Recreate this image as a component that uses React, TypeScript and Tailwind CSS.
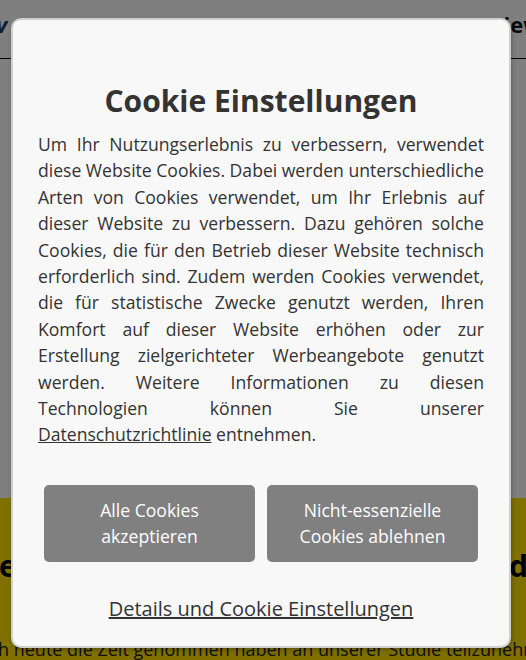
const lines = [
  "Um Ihr Nutzungserlebnis zu verbessern, verwendet",
  "diese Website Cookies. Dabei werden unterschiedliche",
  "Arten von Cookies verwendet, um Ihr Erlebnis auf",
  "dieser Website zu verbessern. Dazu gehören solche",
  "Cookies, die für den Betrieb dieser Website technisch",
  "erforderlich sind. Zudem werden Cookies verwendet,",
  "die für statistische Zwecke genutzt werden, Ihren",
  "Komfort auf dieser Website erhöhen oder zur",
  "Erstellung zielgerichteter Werbeangebote genutzt",
  "werden. Weitere Informationen zu diesen",
  "Technologien können Sie unserer",
];

export default function App() {
  return (
    <div className="relative h-[660px] w-[526px] overflow-hidden bg-white font-['Open_Sans',sans-serif] text-[#222]">
      {/* page behind the dialog */}
      <header className="flex h-[59px] items-start justify-between border-b border-black">
        <span className="-ml-[4px] mt-[8px] text-[22px] font-bold italic text-[#1e3a5f]">v</span>
        <span className="-mr-[16px] mt-[8px] text-[22px] font-bold text-[#111]">Overview</span>
      </header>
      <main className="h-[439px]" />
      <section className="flex h-[162px] flex-col bg-[#ffe000]">
        <div className="mt-[53px] flex justify-between text-[30px] font-bold leading-none text-black">
          <span className="-ml-[1px]">er</span>
          <span className="-mr-[2px]">d</span>
        </div>
        <p className="-ml-[2px] mt-[55px] whitespace-nowrap text-[18px] text-[#222]">
          h heute die Zeit genommen haben an unserer Studie teilzunehmen.
        </p>
      </section>
      <div className="absolute inset-0 bg-black/50" />

      {/* cookie dialog */}
      <div className="absolute left-[11px] top-[18px] flex h-[630px] w-[500px] flex-col items-center rounded-[10px] border-2 border-[#cfcfcf] bg-[#f8f8f8] px-[25px] pt-[63px] text-[#333] shadow-[1px_2px_4px_rgba(0,0,0,0.25)]">
        <h2 className="text-[30px] font-bold leading-[1.2]">Cookie Einstellungen</h2>
        <div className="mt-[12px] w-full text-[17.6px] leading-[1.5]">
          {lines.map((line) => (
            <p
              key={line}
              className="whitespace-nowrap text-justify [text-align-last:justify] [word-spacing:-2px]"
            >
              {line}
            </p>
          ))}
          <p className="whitespace-nowrap">
            <a className="underline">Datenschutzrichtlinie</a> entnehmen.
          </p>
        </div>
        <div className="mt-[37px] grid w-full grid-cols-2 gap-3 px-[6px]">
          <button className="h-[77px] rounded-[5px] bg-[#808080] px-4 text-[17.6px] leading-[1.5] text-white">
            Alle Cookies
            <br />
            akzeptieren
          </button>
          <button className="h-[77px] rounded-[5px] bg-[#808080] px-4 text-[17.6px] leading-[1.5] text-white">
            Nicht-essenzielle
            <br />
            Cookies ablehnen
          </button>
        </div>
        <a className="mt-[32px] text-[20px] leading-[1.5] underline">
          Details und Cookie Einstellungen
        </a>
      </div>
    </div>
  );
}
